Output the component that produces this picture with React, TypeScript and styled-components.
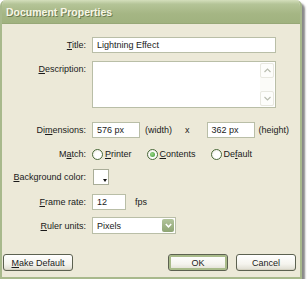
import React from 'react';
import styled, { createGlobalStyle, css } from 'styled-components';

const GlobalStyle = createGlobalStyle`
  html, body {
    margin: 0;
    padding: 0;
    background: #ffffff;
  }
  body {
    font-family: 'Liberation Sans', Arial, sans-serif;
    font-size: 9px;
    color: #1a1a1a;
  }
`;

// ===== Components =====

const Underline: React.FC<{ text: string; at: number }> = ({ text, at }) => (
  <>
    {text.slice(0, at)}
    <u>{text[at]}</u>
    {text.slice(at + 1)}
  </>
);

const Radio: React.FC<{ label: string; at: number; checked?: boolean }> = ({ label, at, checked }) => (
  <RadioItem>
    <RadioDot $checked={!!checked} />
    <span>
      <Underline text={label} at={at} />
    </span>
  </RadioItem>
);

export default function App() {
  return (
    <>
      <GlobalStyle />
      <Window>
        <TitleBar>Document Properties</TitleBar>
        <Body>
          <Form>
            <Row $top={0}>
              <Label><Underline text="Title:" at={0} /></Label>
              <TextBox $w={184}>Lightning Effect</TextBox>
            </Row>

            <Row $top={8} $align="flex-start">
              <Label $pt={3}><Underline text="Description:" at={0} /></Label>
              <TextArea>
                <ScrollBar>
                  <ScrollBtn>
                    <svg width="7" height="5" viewBox="0 0 7 5">
                      <path d="M0.5 4 L3.5 1 L6.5 4" fill="none" stroke="#b9bdb0" strokeWidth="1.2" />
                    </svg>
                  </ScrollBtn>
                  <ScrollBtn>
                    <svg width="7" height="5" viewBox="0 0 7 5">
                      <path d="M0.5 1 L3.5 4 L6.5 1" fill="none" stroke="#b9bdb0" strokeWidth="1.2" />
                    </svg>
                  </ScrollBtn>
                </ScrollBar>
              </TextArea>
            </Row>

            <Row $top={14}>
              <Label>Di<u>m</u>ensions:</Label>
              <TextBox $w={48}>576 px</TextBox>
              <Plain $ml={5}>(width)</Plain>
              <Plain $ml={13}>x</Plain>
              <TextBox $w={48} $ml={17}>362 px</TextBox>
              <Plain $ml={4}>(height)</Plain>
            </Row>

            <Row $top={8}>
              <Label>M<u>a</u>tch:</Label>
              <RadioGroup>
                <Radio label="Printer" at={0} />
                <Radio label="Contents" at={0} checked />
                <Radio label="Default" at={2} />
              </RadioGroup>
            </Row>

            <Row $top={7}>
              <Label><Underline text="Background color:" at={0} /></Label>
              <Swatch />
            </Row>

            <Row $top={9}>
              <Label><Underline text="Frame rate:" at={0} /></Label>
              <TextBox $w={34}>12</TextBox>
              <Plain $ml={9}>fps</Plain>
            </Row>

            <Row $top={7}>
              <Label><Underline text="Ruler units:" at={0} /></Label>
              <Select>
                <span>Pixels</span>
                <DropBtn>
                  <svg width="7" height="5" viewBox="0 0 7 5">
                    <path d="M0.8 1 L3.5 3.8 L6.2 1" fill="none" stroke="#ffffff" strokeWidth="1.5" />
                  </svg>
                </DropBtn>
              </Select>
            </Row>
          </Form>

          <Footer>
            <Button $w={70}><Underline text="Make Default" at={0} /></Button>
            <FooterRight>
              <Button $w={60} $default>OK</Button>
              <Button $w={60}>Cancel</Button>
            </FooterRight>
          </Footer>
        </Body>
      </Window>
    </>
  );
}

// ===== Styles =====

const Window = styled.div`
  width: 302px;
  height: 279px;
  display: flex;
  flex-direction: column;
  background: #ece9d8;
  border: 2px solid #a8b98c;
  border-top: none;
  border-radius: 6px 6px 0 0;
  box-sizing: border-box;
  box-shadow: 3px 3px 2px rgba(40, 40, 40, 0.55);
  overflow: hidden;
`;

const TitleBar = styled.div`
  height: 23px;
  margin: 0 -2px;
  display: flex;
  align-items: center;
  padding-left: 6px;
  background: linear-gradient(180deg, #d4dfbc 0%, #b4c497 18%, #a5b684 60%, #a0b27f 100%);
  color: #f7f6e6;
  font-size: 10.5px;
  font-weight: bold;
  text-shadow: 1px 1px 0 #6e7c52;
  border-bottom: 1px solid #97a877;
`;

const Body = styled.div`
  flex: 1;
  display: flex;
  flex-direction: column;
  padding: 13px 4px 4px 1px;
`;

const Form = styled.div`
  display: flex;
  flex-direction: column;
`;

const Row = styled.div<{ $top: number; $align?: string }>`
  display: flex;
  align-items: ${(p) => p.$align || 'center'};
  margin-top: ${(p) => p.$top}px;
  min-height: 16px;
`;

const Label = styled.div<{ $pt?: number }>`
  width: 83px;
  flex: none;
  text-align: right;
  padding-right: 6px;
  padding-top: ${(p) => p.$pt || 0}px;
  white-space: nowrap;
`;

const fieldBorder = css`
  border: 1px solid #b9bea7;
  background: #ffffff;
  box-sizing: border-box;
`;

const TextBox = styled.div<{ $w: number; $ml?: number }>`
  ${fieldBorder};
  width: ${(p) => p.$w}px;
  height: 16px;
  margin-left: ${(p) => p.$ml || 0}px;
  padding: 0 4px;
  display: flex;
  align-items: center;
  white-space: nowrap;
`;

const TextArea = styled.div`
  ${fieldBorder};
  width: 184px;
  height: 47px;
  display: flex;
  justify-content: flex-end;
  padding: 1px;
`;

const ScrollBar = styled.div`
  width: 14px;
  display: flex;
  flex-direction: column;
  justify-content: space-between;
  background: #fbfbf8;
`;

const ScrollBtn = styled.div`
  height: 13px;
  display: flex;
  align-items: center;
  justify-content: center;
  border: 1px solid #e8e8e0;
  border-radius: 2px;
  background: #fdfdfb;
`;

const Plain = styled.span<{ $ml: number }>`
  margin-left: ${(p) => p.$ml}px;
  white-space: nowrap;
`;

const RadioGroup = styled.div`
  display: flex;
  align-items: center;
  gap: 15px;
`;

const RadioItem = styled.label`
  display: flex;
  align-items: center;
  gap: 2px;
`;

const RadioDot = styled.span<{ $checked: boolean }>`
  width: 11px;
  height: 11px;
  border-radius: 50%;
  box-sizing: border-box;
  border: 1px solid #4a6a3a;
  background: radial-gradient(circle at 60% 60%, #ffffff 40%, #e6e4da 100%);
  display: flex;
  align-items: center;
  justify-content: center;

  &::after {
    content: '';
    display: ${(p) => (p.$checked ? 'block' : 'none')};
    width: 5px;
    height: 5px;
    border-radius: 50%;
    background: radial-gradient(circle at 40% 40%, #9ad88a, #3f9a35);
  }
`;

const Swatch = styled.div`
  ${fieldBorder};
  width: 16px;
  height: 16px;
  margin-left: 1px;
  border-color: #a9ad98;
  position: relative;

  &::after {
    content: '';
    position: absolute;
    right: 1px;
    bottom: 2px;
    border-left: 2.5px solid transparent;
    border-right: 2.5px solid transparent;
    border-top: 3px solid #111;
  }
`;

const Select = styled.div`
  ${fieldBorder};
  width: 84px;
  height: 17px;
  display: flex;
  align-items: center;
  justify-content: space-between;
  padding: 1px 1px 1px 4px;
`;

const DropBtn = styled.div`
  width: 12px;
  height: 13px;
  display: flex;
  align-items: center;
  justify-content: center;
  background: linear-gradient(180deg, #b2c49b 0%, #8fa574 100%);
  border-radius: 2px;
`;

const Footer = styled.div`
  margin-top: auto;
  margin-bottom: 2px;
  display: flex;
  align-items: center;
  justify-content: space-between;
`;

const FooterRight = styled.div`
  display: flex;
  gap: 8px;
`;

const Button = styled.div<{ $w: number; $default?: boolean }>`
  width: ${(p) => p.$w}px;
  height: 17px;
  box-sizing: border-box;
  display: flex;
  align-items: center;
  justify-content: center;
  border: 1px solid #5c6150;
  border-radius: 3px;
  background: linear-gradient(180deg, #ffffff 0%, #f5f4ee 60%, #dedcd0 100%);
  white-space: nowrap;
  box-shadow: ${(p) => (p.$default ? 'inset 0 0 0 2px #a9bb8a' : 'inset 0 -1px 0 #d6d3c4')};
`;
